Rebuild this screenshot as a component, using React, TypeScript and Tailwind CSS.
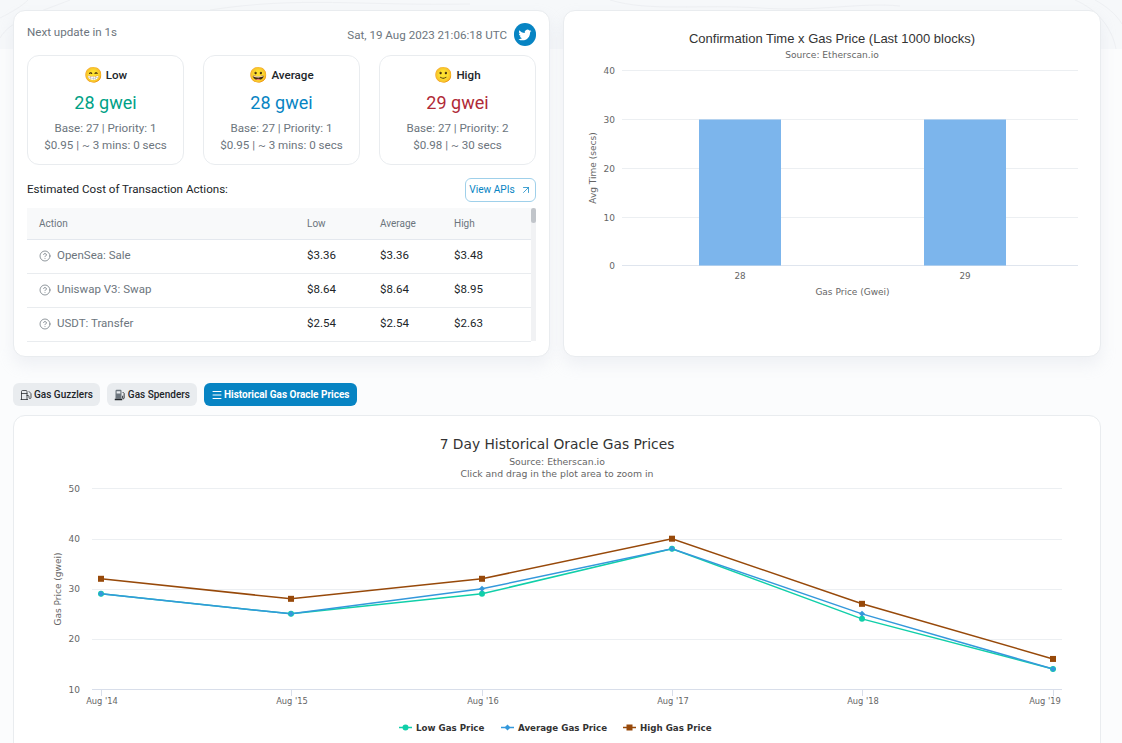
import { ArrowUpRight, CircleHelp, Fuel, Menu } from "lucide-react";

const tiers = [
  { emoji: "😁", name: "Low", gwei: "28 gwei", color: "text-[#00a186]", base: "Base: 27 | Priority: 1", cost: "$0.95 | ~ 3 mins: 0 secs" },
  { emoji: "😀", name: "Average", gwei: "28 gwei", color: "text-[#0784c3]", base: "Base: 27 | Priority: 1", cost: "$0.95 | ~ 3 mins: 0 secs" },
  { emoji: "🙂", name: "High", gwei: "29 gwei", color: "text-[#b02a37]", base: "Base: 27 | Priority: 2", cost: "$0.98 | ~ 30 secs" },
];

const actions = [
  { name: "OpenSea: Sale", low: "$3.36", avg: "$3.36", high: "$3.48" },
  { name: "Uniswap V3: Swap", low: "$8.64", avg: "$8.64", high: "$8.95" },
  { name: "USDT: Transfer", low: "$2.54", avg: "$2.54", high: "$2.63" },
];

const chartFont = "'DejaVu Sans', sans-serif";

const xs = [101, 291, 482, 672, 862, 1053];
const labels = ["Aug '14", "Aug '15", "Aug '16", "Aug '17", "Aug '18", "Aug '19"];
const labelXs = [102, 292, 483, 673, 863, 1045];
const toY = (v: number) => 689 - (v - 10) * 5.01;
const points = (vals: number[]) => vals.map((v, i) => `${xs[i]},${toY(v)}`).join(" ");
const low = [29, 25, 29, 38, 24, 14];
const avg = [29, 25, 30, 38, 25, 14];
const high = [32, 28, 32, 40, 27, 16];

const BarChart = () => (
  <svg viewBox="564 11 536 345" width="536" height="345" className="block" fontFamily={chartFont}>
    <text x="832" y="42.500" textAnchor="middle" fontSize="13" fill="#333" fontFamily="'Liberation Sans', sans-serif">
      Confirmation Time x Gas Price (Last 1000 blocks)
    </text>
    <text x="832" y="58" textAnchor="middle" fontSize="9.100" fill="#666">Source: Etherscan.io</text>
    {[70, 119, 168, 217].map((y) => (
      <line key={y} x1="622" x2="1078" y1={y + 0.5} y2={y + 0.5} stroke="#eceff2" />
    ))}
    <line x1="622" x2="1078" y1="265.5" y2="265.5" stroke="#dfe5ee" />
    {[["40", 70], ["30", 119], ["20", 168], ["10", 217], ["0", 265]].map(([t, y]) => (
      <text key={t} x="615" y={Number(y) + 3.5} textAnchor="end" fontSize="9" fill="#666">{t}</text>
    ))}
    <rect x="699" y="119.5" width="82" height="146" fill="#7cb5ec" />
    <rect x="924" y="119.5" width="82" height="146" fill="#7cb5ec" />
    <text x="740" y="279" textAnchor="middle" fontSize="8.800" fill="#666">28</text>
    <text x="965" y="279" textAnchor="middle" fontSize="8.800" fill="#666">29</text>
    <text x="852.5" y="294.500" textAnchor="middle" fontSize="9" fill="#666">Gas Price (Gwei)</text>
    <text transform="translate(596 168) rotate(-90)" textAnchor="middle" fontSize="9" fill="#666">Avg Time (secs)</text>
  </svg>
);

const LineChart = () => (
  <svg viewBox="14 416 1086 327" width="1086" height="327" className="block" fontFamily={chartFont}>
    <text x="557" y="449" textAnchor="middle" fontSize="13.800" fill="#333">7 Day Historical Oracle Gas Prices</text>
    <text x="557" y="465" textAnchor="middle" fontSize="9.300" fill="#666">Source: Etherscan.io</text>
    <text x="557" y="477" textAnchor="middle" fontSize="9.300" fill="#666">Click and drag in the plot area to zoom in</text>
    {[488, 539, 589, 639].map((y) => (
      <line key={y} x1="92" x2="1062" y1={y + 0.5} y2={y + 0.5} stroke="#eceff2" />
    ))}
    <line x1="92" x2="1062" y1="689.5" y2="689.5" stroke="#d8deea" />
    {[50, 40, 30, 20, 10].map((v) => (
      <text key={v} x="80" y={toY(v) + 3.5} textAnchor="end" fontSize="9" fill="#666">{v}</text>
    ))}
    {xs.map((x, i) => (
      <g key={x}>
        <line x1={x + 0.5} x2={x + 0.5} y1="689" y2="696" stroke="#d8deea" />
        <text x={labelXs[i]} y="704" textAnchor="middle" fontSize="8.300" fill="#666">{labels[i]}</text>
      </g>
    ))}
    <text transform="translate(61 589) rotate(-90)" textAnchor="middle" fontSize="9" fill="#666">Gas Price (gwei)</text>

    <polyline points={points(low)} fill="none" stroke="#10cfa9" strokeWidth="1.5" />
    <polyline points={points(avg)} fill="none" stroke="#3498db" strokeWidth="1.5" />
    <polyline points={points(high)} fill="none" stroke="#97490a" strokeWidth="1.5" />
    {low.map((v, i) => (
      <circle key={i} cx={xs[i]} cy={toY(v)} r="3" fill="#10cfa9" />
    ))}
    {avg.map((v, i) => (
      <path
        key={i}
        d={`M${xs[i]} ${toY(v) - 3}L${xs[i] + 3} ${toY(v)}L${xs[i]} ${toY(v) + 3}L${xs[i] - 3} ${toY(v)}Z`}
        fill="#3498db"
      />
    ))}
    {high.map((v, i) => (
      <rect key={i} x={xs[i] - 3} y={toY(v) - 3} width="6" height="6" fill="#97490a" />
    ))}

    <g fontSize="8.700" fontWeight="700" fill="#333">
      <line x1="399" x2="412" y1="727.5" y2="727.5" stroke="#10cfa9" strokeWidth="1.5" />
      <circle cx="405.5" cy="727.5" r="3" fill="#10cfa9" />
      <text x="416" y="731">Low Gas Price</text>
      <line x1="501" x2="514" y1="727.5" y2="727.5" stroke="#3498db" strokeWidth="1.5" />
      <path d="M507.5 724.5L510.5 727.5L507.5 730.5L504.5 727.5Z" fill="#3498db" />
      <text x="518" y="731">Average Gas Price</text>
      <line x1="623" x2="636" y1="727.5" y2="727.5" stroke="#97490a" strokeWidth="1.5" />
      <rect x="626.5" y="724.5" width="6" height="6" fill="#97490a" />
      <text x="640" y="731">High Gas Price</text>
    </g>
  </svg>
);

const TwitterGlyph = () => (
  <svg viewBox="0 0 24 24" className="w-3.5 h-3.5" fill="#fff">
    <path d="M23 5.1c-.8.4-1.7.6-2.6.7.9-.6 1.6-1.4 2-2.5-.9.5-1.9.9-2.9 1.1a4.6 4.6 0 0 0-7.900 4.200C7.800 8.400 4.400 6.600 2.200 3.800a4.600 4.600 0 0 0 1.400 6.100c-.7 0-1.400-.2-2.100-.6 0 2.200 1.600 4.100 3.700 4.600-.7.2-1.400.2-2.100.1.600 1.800 2.300 3.200 4.300 3.200A9.300 9.300 0 0 1 .6 19.100 13 13 0 0 0 7.600 21.200c8.500 0 13.300-7.200 13-13.600.9-.7 1.700-1.500 2.400-2.500z" />
  </svg>
);

const PumpFilled = () => (
  <svg viewBox="0 0 16 16" className="w-3 h-3">
    <path d="M2 2.500A1.500 1.500 0 0 1 3.500 1h5A1.500 1.500 0 0 1 10 2.500V13H2z" fill="#6c757d" />
    <rect x="3.500" y="3" width="5" height="3" fill="#e9ecef" />
    <rect x="1" y="13" width="10" height="2" fill="#212529" />
    <path d="M11.500 4l2 2v6a1 1 0 0 1-2 0V9" fill="none" stroke="#212529" strokeWidth="1.200" />
  </svg>
);

export default function App() {
  return (
    <div className="relative h-[743px] overflow-hidden bg-[#fbfcfd] font-['Roboto',sans-serif] text-[#212529]">
      <div className="absolute inset-x-0 top-0 h-[49px] bg-[#f6f8fa]">
        <svg viewBox="0 0 1122 49" className="w-full h-full" fill="none" stroke="#eef0f3">
          <path d="M0 38C10 20 40 12 70 0" />
          <path d="M0 18C12 12 22 6 28 0" />
          <path d="M210 10C300 -4 360 6 470 4" />
          <path d="M610 0C650 12 700 4 760 8S860 2 900 6" />
          <path d="M1075 0C1098 10 1112 28 1116 49" />
          <path d="M1095 0C1106 6 1116 14 1122 24" />
        </svg>
      </div>

      <div className="relative flex flex-col pl-[13px] pr-[21px] pt-[10px]">
        <div className="grid grid-cols-[537px_538px] gap-[13px]">
          <div className="h-[347px] overflow-hidden rounded-xl border border-[#e9ecef] bg-white px-[13px] pt-3 shadow-[0_8px_16px_rgba(189,197,209,0.2)]">
            <div className="flex justify-between">
              <span className="text-[11.6px] leading-[18px] text-[#6c757d]">Next update in 1s</span>
              <div className="flex items-center gap-[7px]">
                <span className="pt-[2px] text-[11.6px] text-[#6c757d]">Sat, 19 Aug 2023 21:06:18 UTC</span>
                <div className="flex h-[23px] w-[22px] items-center justify-center rounded-full bg-[#0784c3]">
                  <TwitterGlyph />
                </div>
              </div>
            </div>

            <div className="mt-[9px] grid grid-cols-3 gap-[19px]">
              {tiers.map((t) => (
                <div key={t.name} className="flex h-[110px] flex-col items-center rounded-xl border border-[#e9ecef] pt-[10px]">
                  <div className="flex items-center gap-[3px] text-[11.6px] font-medium leading-[18px]">
                    <span className="text-[15px] leading-[18px]">{t.emoji}</span>
                    {t.name}
                  </div>
                  <div className={`mt-[6px] text-[18px] leading-[26px] ${t.color}`}>{t.gwei}</div>
                  <div className="mt-[3px] text-[11.6px] leading-[18px] text-[#6c757d]">{t.base}</div>
                  <div className="text-[11.6px] leading-[17px] text-[#6c757d]">{t.cost}</div>
                </div>
              ))}
            </div>

            <div className="mt-[13px] flex items-start justify-between">
              <span className="pt-[2px] text-[11.6px] leading-[18px]">Estimated Cost of Transaction Actions:</span>
              <button className="flex h-[24px] w-[71px] items-center justify-center gap-[5px] rounded-md border border-[#9fd0ea] text-[10.2px] text-[#0784c3]">
                View APIs
                <ArrowUpRight className="h-3 w-3" strokeWidth={1.5} />
              </button>
            </div>

            <div className="mt-[6px] flex h-[133px]">
              <table className="h-fit flex-1 table-fixed border-collapse text-left text-[11.5px]">
                <thead>
                  <tr className="h-[31px] border-b border-[#e4e8ee] bg-[#f8f9fa] text-[10px] text-[#6c757d]">
                    <th className="w-[280px] pl-3 font-normal">Action</th>
                    <th className="w-[73px] font-normal">Low</th>
                    <th className="w-[74px] font-normal">Average</th>
                    <th className="font-normal">High</th>
                  </tr>
                </thead>
                <tbody>
                  {actions.map((a) => (
                    <tr key={a.name} className="h-[34px] border-b border-[#e9ecef]">
                      <td className="pl-3 text-[#6c757d]">
                        <span className="flex items-center gap-[6px]">
                          <CircleHelp className="h-3 w-3" strokeWidth={1.5} />
                          {a.name}
                        </span>
                      </td>
                      <td>{a.low}</td>
                      <td>{a.avg}</td>
                      <td>{a.high}</td>
                    </tr>
                  ))}
                </tbody>
              </table>
              <div className="h-full w-[5px] bg-[#f1f2f4]">
                <div className="h-[15px] rounded-sm bg-[#c1c5ca]" />
              </div>
            </div>
          </div>

          <div className="h-[347px] overflow-hidden rounded-xl border border-[#e9ecef] bg-white shadow-[0_8px_16px_rgba(189,197,209,0.2)]">
            <BarChart />
          </div>
        </div>

        <div className="mt-[26px] flex gap-[7px]">
          <div className="flex h-[23px] items-center gap-[2px] rounded-md bg-[#e9ecef] px-[7px] text-[10px] font-medium text-[#212529]">
            <Fuel className="h-3 w-3" strokeWidth={1.5} />
            Gas Guzzlers
          </div>
          <div className="flex h-[23px] items-center gap-[2px] rounded-md bg-[#e9ecef] px-[7px] text-[10px] font-medium text-[#212529]">
            <PumpFilled />
            Gas Spenders
          </div>
          <div className="flex h-[23px] items-center gap-[1px] rounded-md bg-[#0784c3] px-[7px] text-[10px] font-bold text-white">
            <Menu className="h-3 w-3" strokeWidth={2} />
            Historical Gas Oracle Prices
          </div>
        </div>

        <div className="mt-[9px] h-[340px] overflow-hidden rounded-t-xl border border-[#e9ecef] bg-white">
          <LineChart />
        </div>
      </div>
    </div>
  );
}
